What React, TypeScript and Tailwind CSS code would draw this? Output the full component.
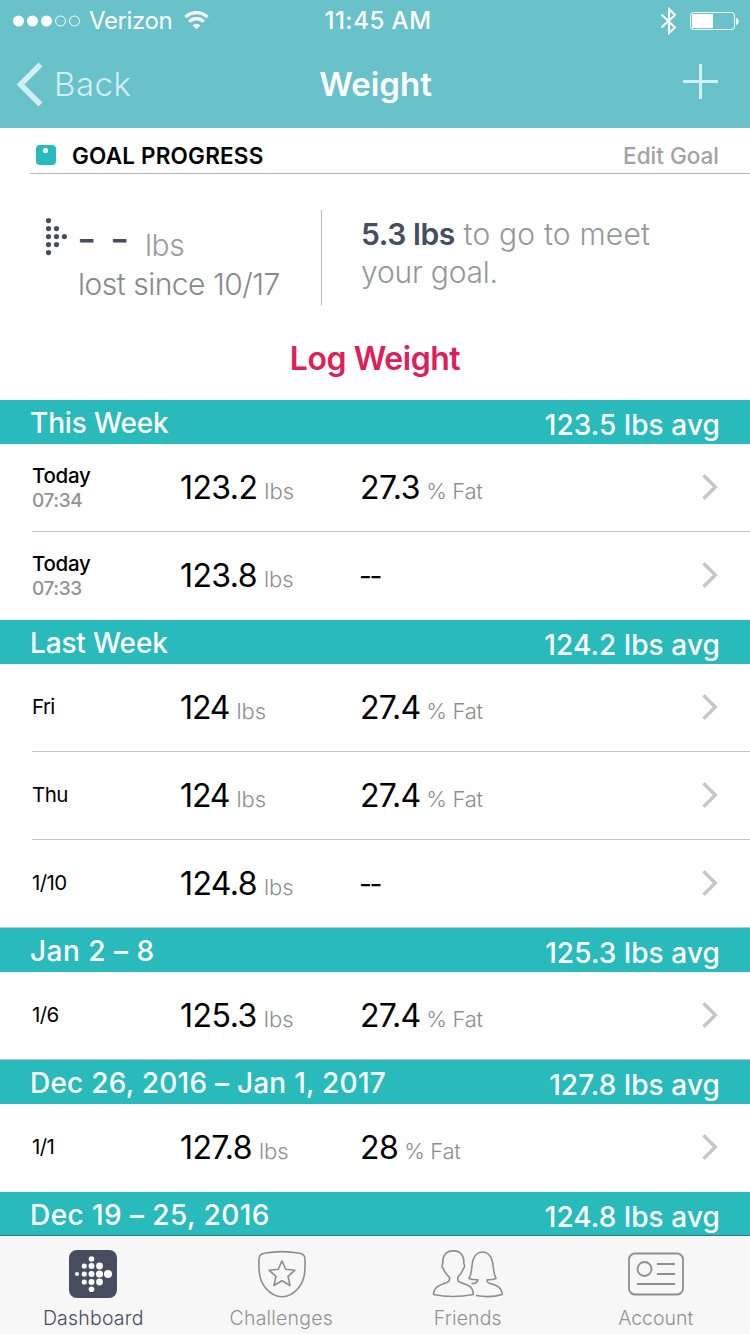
type Reading = {
  day: string;
  time?: string;
  weight: string;
  weightTracking: string;
  fat?: string;
  fatTracking?: string;
  bottomLine?: boolean;
};

type Week = {
  label: string;
  labelTracking: string;
  avg: string;
  closingLine?: boolean;
  rows: Reading[];
};

const weeks: Week[] = [
  {
    label: "This Week",
    labelTracking: "tracking-[-0.15px]",
    avg: "123.5 lbs avg",
    rows: [
      { day: "Today", time: "07:34", weight: "123.2", weightTracking: "tracking-[-0.6px]", fat: "27.3", fatTracking: "tracking-[-0.4px]", bottomLine: true },
      { day: "Today", time: "07:33", weight: "123.8", weightTracking: "tracking-[-0.6px]" },
    ],
  },
  {
    label: "Last Week",
    labelTracking: "tracking-[-0.15px]",
    avg: "124.2 lbs avg",
    closingLine: true,
    rows: [
      { day: "Fri", weight: "124", weightTracking: "tracking-[-1.1px]", fat: "27.4", fatTracking: "tracking-[-0.8px]", bottomLine: true },
      { day: "Thu", weight: "124", weightTracking: "tracking-[-1.1px]", fat: "27.4", fatTracking: "tracking-[-0.8px]", bottomLine: true },
      { day: "1/10", weight: "124.8", weightTracking: "tracking-[-0.6px]" },
    ],
  },
  {
    label: "Jan 2 – 8",
    labelTracking: "tracking-[0.5px]",
    avg: "125.3 lbs avg",
    closingLine: true,
    rows: [
      { day: "1/6", weight: "125.3", weightTracking: "tracking-[-0.5px]", fat: "27.4", fatTracking: "tracking-[-0.8px]" },
    ],
  },
  {
    label: "Dec 26, 2016 – Jan 1, 2017",
    labelTracking: "tracking-[0.23px]",
    avg: "127.8 lbs avg",
    rows: [
      { day: "1/1", weight: "127.8", weightTracking: "tracking-[-0.6px]", fat: "28", fatTracking: "tracking-[-0.6px]" },
    ],
  },
  {
    label: "Dec 19 – 25, 2016",
    labelTracking: "tracking-[0.43px]",
    avg: "124.8 lbs avg",
    rows: [],
  },
];

function StatusBar() {
  return (
    <div className="flex h-[41px] items-center justify-between pl-[13px] pr-[11px]">
      <div className="flex w-[280px] items-center">
        <svg width="68" height="12" viewBox="0 0 68 12" fill="white">
          <circle cx="5.5" cy="6" r="5.5" />
          <circle cx="19.5" cy="6" r="5.5" />
          <circle cx="33.5" cy="6" r="5.5" />
          <circle cx="47.5" cy="6" r="5" fill="none" stroke="white" />
          <circle cx="61.5" cy="6" r="5" fill="none" stroke="white" />
        </svg>
        <span className="ml-[8px] text-[24px] leading-[41px] tracking-[-0.4px]">Verizon</span>
        <svg className="mb-[2px] ml-[12px]" width="25" height="20" viewBox="0 0 26 20" fill="none" stroke="white" strokeWidth="3.4">
          <path d="M1.6 7.1a16.2 16.2 0 0 1 22.8 0" />
          <path d="M5.5 11.6a10.6 10.6 0 0 1 15 0" />
          <path d="M13 19.500l-4-4.1a5.8 5.8 0 0 1 8 0z" fill="white" stroke="none" />
        </svg>
      </div>
      <span className="pl-[2px] text-[24px] font-medium leading-[41px] tracking-[0.5px]">11:45 AM</span>
      <div className="flex w-[278px] items-center justify-end gap-[12px]">
        <svg width="17" height="28" viewBox="0 0 17 28" fill="none" stroke="white" strokeWidth="2">
          <path d="M1.500 7.500L15 20.500 9 26V2l6 6L1.500 20.500" />
        </svg>
        <svg width="50" height="20" viewBox="0 0 50 20" fill="none">
          <rect x="1.5" y="1.5" width="44" height="17" rx="3" stroke="white" />
          <rect x="3" y="3" width="21" height="14" rx="1" fill="white" />
          <path d="M47 7c2 .3 2.6 1.700 2.600 3.500S49 13.700 47 14z" fill="white" />
        </svg>
      </div>
    </div>
  );
}

function NavBar() {
  return (
    <div className="flex h-[85px] items-center pl-[16px] pr-[31px]">
      <div className="flex w-[240px] items-center text-[#d2eff1]">
        <svg width="27" height="44" viewBox="0 0 27 44" fill="none" stroke="currentColor" strokeWidth="5.500">
          <path d="M24.500 2.500L4.500 22.500 24.500 42.500" />
        </svg>
        <span className="ml-[11px] text-[33px] font-light leading-[44px] tracking-[0.5px]">Back</span>
      </div>
      <span className="flex-1 pl-[1px] text-center text-[33px] font-semibold leading-[44px]">Weight</span>
      <div className="flex w-[225px] justify-end pb-[4px]">
        <svg width="36" height="36" viewBox="0 0 36 36" stroke="#d2eff1" strokeWidth="3">
          <path d="M17.500 0V35M0 17.500H35" />
        </svg>
      </div>
    </div>
  );
}

function GoalProgress() {
  return (
    <section className="h-[272px]">
      <div className="ml-[30px] flex h-[46px] items-center border-b border-[#b8b8b8] pl-[6px] pr-[31px] pt-[9px]">
        <svg width="20" height="20" viewBox="0 0 20 20">
          <rect width="20" height="20" rx="4" fill="#29babb" />
          <circle cx="9.500" cy="5.500" r="2.600" fill="white" />
        </svg>
        <h2 className="ml-[16px] pt-[1px] text-[22.500px] font-semibold leading-[35px] tracking-[0.200px] text-black">GOAL PROGRESS</h2>
        <span className="ml-auto pt-[1px] text-[22.500px] font-medium leading-[35px] text-[#a2a2a2]">Edit Goal</span>
      </div>
      <div className="flex pt-[36px]">
        <div className="flex h-[95px] w-[322px] border-r border-[#bbbbbb] pl-[45px]">
          <svg className="mt-[8px]" width="22" height="38" viewBox="0 0 22 38" fill="#454d5e">
            <circle cx="3.500" cy="2.600" r="2.600" />
            <circle cx="3.500" cy="10.600" r="2.600" />
            <circle cx="3.500" cy="18.600" r="2.600" />
            <circle cx="3.500" cy="26.600" r="2.600" />
            <circle cx="3.500" cy="34.600" r="2.600" />
            <circle cx="11.500" cy="10.600" r="2.600" />
            <circle cx="11.500" cy="18.600" r="2.600" />
            <circle cx="11.500" cy="26.600" r="2.600" />
            <circle cx="19.400" cy="18.600" r="2.600" />
          </svg>
          <div className="ml-[11px] flex flex-col">
            <div className="mt-[15px] flex h-[40px] items-center whitespace-nowrap leading-[40px]">
              <span className="-ml-[1px] -mt-[12px] flex gap-[14px] text-[42px] text-[#454d5e]">
                <span className="w-[19px]">-</span>
                <span className="w-[19px]">-</span>
              </span>
              <span className="ml-[16px] text-[30px] font-light tracking-[-0.4px] text-[#9a9d9f]">lbs</span>
            </div>
            <span className="whitespace-nowrap text-[30px] font-light leading-[39px] tracking-[-0.5px] text-[#868a8d]">lost since 10/17</span>
          </div>
        </div>
        <div className="pl-[39px] pt-[5px] text-[30px] font-light leading-[38px] text-[#94989a]">
          <p className="tracking-[0.200px]">
            <strong className="font-semibold tracking-[-0.400px] text-[#454d5e]">5.3 lbs</strong> to go to meet
          </p>
          <p className="tracking-[-0.200px]">your goal.</p>
        </div>
      </div>
      <button className="mt-[33px] block w-full text-center text-[32px] font-semibold leading-[42px] tracking-[-0.450px] text-[#dd2058]">
        Log Weight
      </button>
    </section>
  );
}

function ReadingRow({ r }: { r: Reading }) {
  return (
    <div className={"ml-[32px] flex h-[88px] items-center border-b pr-[32px] " + (r.bottomLine ? "border-[#c4c4c6]" : "border-transparent")}>
      <div className="w-[148px] text-black">
        {r.time ? (
          <div className="pt-[1px]">
            <div className="text-[20.500px] font-medium leading-[24px] tracking-[-0.300px]">{r.day}</div>
            <div className="text-[19px] font-medium leading-[25px] tracking-[-0.400px] text-[#929292]">{r.time}</div>
          </div>
        ) : (
          <div className="pb-[2px] text-[20.500px] leading-[24px] tracking-[-0.600px]">{r.day}</div>
        )}
      </div>
      <div className="w-[180px] whitespace-nowrap pt-[5px] leading-[40px]">
        <span className={"text-[32px] text-black " + r.weightTracking}>{r.weight}</span>
        <span className="ml-[7px] text-[22px] font-light text-[#8e8e8e]">lbs</span>
      </div>
      <div className="flex-1 whitespace-nowrap pt-[5px] leading-[40px]">
        {r.fat ? (
          <>
            <span className={"text-[32px] text-black " + r.fatTracking}>{r.fat}</span>
            <span className="ml-[6px] text-[22px] font-light tracking-[-0.300px] text-[#8e8e8e]">% Fat</span>
          </>
        ) : (
          <span className="-ml-[1px] text-[28px] tracking-[-2.500px] text-black">--</span>
        )}
      </div>
      <svg className="mb-[2px]" width="16" height="26" viewBox="0 0 16 26" fill="none" stroke="#c5c6ca" strokeWidth="3.400">
        <path d="M1.500 1.200L13.300 13 1.500 24.800" />
      </svg>
    </div>
  );
}

function DashboardIcon() {
  return (
    <svg width="48" height="48" viewBox="0 0 48 48">
      <rect width="48" height="48" rx="8" fill="#454d5e" />
      <g fill="white">
        <circle cx="8" cy="24" r="2" />
        <circle cx="15.300" cy="16" r="2.600" />
        <circle cx="15.300" cy="24" r="2.600" />
        <circle cx="15.300" cy="32" r="2.600" />
        <circle cx="22.500" cy="9" r="2.800" />
        <circle cx="22.500" cy="16" r="3" />
        <circle cx="22.500" cy="24" r="3" />
        <circle cx="22.500" cy="32" r="3" />
        <circle cx="22.500" cy="39.300" r="2.800" />
        <circle cx="30.500" cy="16" r="3.400" />
        <circle cx="30.500" cy="24" r="3.600" />
        <circle cx="30.500" cy="32" r="3.400" />
        <circle cx="39" cy="24" r="4" />
      </g>
    </svg>
  );
}

function ChallengesIcon() {
  return (
    <svg className="ml-[2px]" width="50" height="48" viewBox="0 0 50 48" fill="none" stroke="#8e8e8e" strokeWidth="1.600" strokeLinejoin="round">
      <path d="M7 3.300C18 1.200 32 1.200 43 3.300Q47.800 4.300 48 9C48.500 22 47.500 31 41 38.500Q34 46.700 25 46.700T9 38.500C2.500 31 1.500 22 2 9Q2.200 4.300 7 3.300Z" />
      <path d="M25 10.800L28.700 19.300 38 20.200 31 26.400 33.100 35.500 25 30.700 16.900 35.500 19 26.400 12 20.200 21.300 19.300Z" />
    </svg>
  );
}

function FriendsIcon() {
  return (
    <svg width="72" height="48" viewBox="0 0 72 48" fill="none" stroke="#8e8e8e" strokeWidth="1.600" strokeLinejoin="round" strokeLinecap="round">
      <path d="M17.500 27.500C14 24 12 21.500 11.300 18.500C9.800 17.500 9.800 15.500 10.800 13.500C10.300 5 14.500 .900 21.300 .900S32.300 5 31.800 13.500C32.800 15.500 32.800 17.500 31.300 18.500C30.600 21.500 28.600 24 25.800 27.500C25.400 30 25.800 31.500 28 32.300C35 34.800 41 35.500 41.300 44.500Q31 46.500 21 46.500T1.500 44.500C1.800 36.500 8 34.800 15.300 32.300C17.500 31.500 17.900 30 17.500 27.500Z" />
      <path d="M40 33.500C43 33.500 45.500 32.500 45.800 29.800C42.500 29.900 39.500 29.500 37 28.500C40.500 23 39 17 41 10C43 4 46.500 2 50.500 2S58 4 60 10C62 17 61 23 64 28.500C61.500 29.700 58.500 29.900 55.200 29.800C55 32.500 56 33 59 33.800C65.500 35.500 69.500 37.500 70.300 44.500C62 47 52 47 44.500 45.500" />
    </svg>
  );
}

function AccountIcon() {
  return (
    <svg width="56" height="44" viewBox="0 0 56 44" fill="none" stroke="#8e8e8e" strokeWidth="1.800">
      <rect x="1" y="1.500" width="54" height="41" rx="6" />
      <circle cx="16.500" cy="17" r="7" />
      <path d="M29 12H47M29 22H47M9 32H47" />
    </svg>
  );
}

const tabs = [
  { label: "Dashboard", Icon: DashboardIcon, style: "text-[#454d5e] tracking-[0.200px]", shift: "pr-[1px]" },
  { label: "Challenges", Icon: ChallengesIcon, style: "text-[#929292] tracking-[0.200px]", shift: "pr-0" },
  { label: "Friends", Icon: FriendsIcon, style: "text-[#929292] tracking-[0.100px]", shift: "pr-[2px]" },
  { label: "Account", Icon: AccountIcon, style: "text-[#929292]", shift: "pr-[1px]" },
];

export default function App() {
  return (
    <div className="flex h-[1334px] w-[750px] flex-col overflow-hidden bg-white font-['Inter','Liberation_Sans',sans-serif]">
      <header className="h-[128px] shrink-0 bg-[#69c2ca] text-white">
        <StatusBar />
        <NavBar />
      </header>
      <main className="h-[1107px] shrink-0 overflow-hidden">
        <GoalProgress />
        {weeks.map((w) => (
          <section key={w.label} className={w.closingLine ? "border-b border-[#c4c4c6]" : ""}>
            <div className="flex h-[44px] items-center justify-between bg-[#29babb] pl-[30px] pr-[30px] text-[28px] font-medium leading-[44px] text-white">
              <h3 className={"pt-[2px] leading-[42px] " + w.labelTracking}>{w.label}</h3>
              <span className="pt-[6px] leading-[38px] tracking-[0.100px]">{w.avg}</span>
            </div>
            {w.rows.map((r, i) => (
              <div key={i} className={w.closingLine && i === w.rows.length - 1 ? "-mb-px" : ""}>
                <ReadingRow r={r} />
              </div>
            ))}
          </section>
        ))}
      </main>
      <nav className="flex h-[99px] shrink-0 border-t border-[#2b7d80] bg-[#f7f7f7]">
        {tabs.map(({ label, Icon, style, shift }) => (
          <button key={label} className={"flex w-1/4 flex-col items-center pt-[14px] " + shift}>
            <span className="flex h-[48px] items-center">
              <Icon />
            </span>
            <span className={"mt-[7px] text-[19.500px] font-light leading-[27px] " + style}>{label}</span>
          </button>
        ))}
      </nav>
    </div>
  );
}
